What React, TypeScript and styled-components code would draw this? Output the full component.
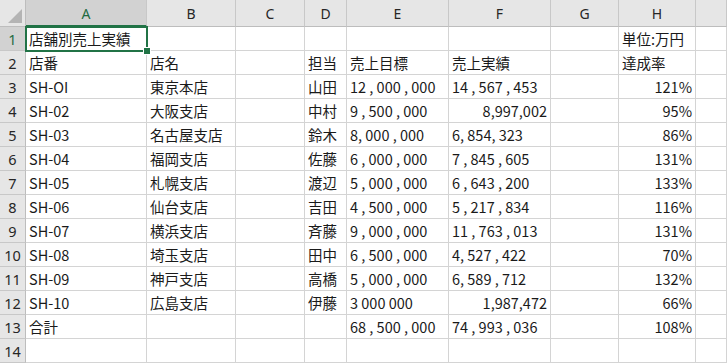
import React from "react";
import styled, { createGlobalStyle } from "styled-components";

const Global = createGlobalStyle`
  html, body { margin: 0; padding: 0; background: #fff; }
  body { font-family: "Noto Sans CJK JP", "Noto Sans", sans-serif; }
`;

const COLS = [26, 121, 89, 69, 42, 102, 102, 68, 77];
const LETTERS = ["A", "B", "C", "D", "E", "F", "G", "H", ""];

const Sheet = styled.div`
  position: relative;
  display: grid;
  grid-template-columns: ${COLS.map((c) => c + "px").join(" ")} 1fr;
  grid-template-rows: 27px repeat(14, 24px);
  width: 727px;
  height: 363px;
  overflow: hidden;
`;

const Corner = styled.div`
  background: #e6e6e6;
  border-right: 1px solid #bdbdbd;
  border-bottom: 1px solid #bdbdbd;
  box-sizing: border-box;
  display: flex;
  align-items: flex-end;
  justify-content: flex-end;
  padding: 0 3px 3px 0;
`;

const ColHead = styled.div<{ $sel?: boolean }>`
  box-sizing: border-box;
  background: ${(p) => (p.$sel ? "#d2d2d2" : "#e6e6e6")};
  color: ${(p) => (p.$sel ? "#1e6b41" : "#262626")};
  border-right: 1px solid #c8c8c8;
  border-bottom: ${(p) => (p.$sel ? "2px solid #217346" : "1px solid #bdbdbd")};
  font-family: "Noto Sans", "Liberation Sans", sans-serif;
  font-size: 14px;
  display: flex;
  align-items: center;
  justify-content: center;
  padding-top: 1px;
`;

const RowHead = styled.div<{ $sel?: boolean }>`
  box-sizing: border-box;
  background: ${(p) => (p.$sel ? "#d2d2d2" : "#e6e6e6")};
  color: ${(p) => (p.$sel ? "#1e6b41" : "#262626")};
  border-right: 1px solid #bdbdbd;
  border-bottom: 1px solid #c8c8c8;
  font-family: "Noto Sans", "Liberation Sans", sans-serif;
  font-size: 14.5px;
  display: flex;
  align-items: center;
  justify-content: center;
`;

const Cell = styled.div<{ $right?: boolean }>`
  box-sizing: border-box;
  border-right: 1px solid #d4d4d4;
  border-bottom: 1px solid #d4d4d4;
  color: #1a1a1a;
  font-size: 14.5px;
  line-height: 23px;
  padding: 0 ${(p) => (p.$right ? "3px" : "2px")} 0 3px;
  text-align: ${(p) => (p.$right ? "right" : "left")};
  white-space: nowrap;
  overflow: visible;
`;

const Selection = styled.div`
  position: absolute;
  left: 25px;
  top: 26px;
  width: 123px;
  height: 26px;
  box-sizing: border-box;
  border: 2px solid #217346;
  pointer-events: none;
`;

const Handle = styled.div`
  position: absolute;
  right: -5px;
  bottom: -5px;
  width: 6px;
  height: 6px;
  background: #217346;
  border: 1px solid #fff;
`;

type Row = (string | { t: string; r: true })[];

const R = (t: string) => ({ t, r: true as const });

const rows: Row[] = [
  ["店舗別売上実績", "", "", "", "", "", "", "単位:万円", ""],
  ["店番", "店名", "", "担当", "売上目標", "売上実績", "", "達成率", ""],
  ["SH-OI", "東京本店", "", "山田", "12 , 000 , 000", "14 , 567 , 453", "", R("121%"), ""],
  ["SH-02", "大阪支店", "", "中村", "9 , 500 , 000", R("8,997,002"), "", R("95%"), ""],
  ["SH-03", "名古屋支店", "", "鈴木", "8, 000 , 000", "6, 854, 323", "", R("86%"), ""],
  ["SH-04", "福岡支店", "", "佐藤", "6 , 000 , 000", "7 , 845 , 605", "", R("131%"), ""],
  ["SH-05", "札幌支店", "", "渡辺", "5 , 000 , 000", "6 , 643 , 200", "", R("133%"), ""],
  ["SH-06", "仙台支店", "", "吉田", "4 , 500 , 000", "5 , 217 , 834", "", R("116%"), ""],
  ["SH-07", "横浜支店", "", "斉藤", "9 , 000 , 000", "11 , 763 , 013", "", R("131%"), ""],
  ["SH-08", "埼玉支店", "", "田中", "6 , 500 , 000", "4, 527 , 422", "", R("70%"), ""],
  ["SH-09", "神戸支店", "", "高橋", "5 , 000 , 000", "6, 589 , 712", "", R("132%"), ""],
  ["SH-10", "広島支店", "", "伊藤", "3 000 000", R("1,987,472"), "", R("66%"), ""],
  ["合計", "", "", "", "68 , 500 , 000", "74 , 993 , 036", "", R("108%"), ""],
  ["", "", "", "", "", "", "", "", ""],
];

export default function App() {
  return (
    <>
      <Global />
      <Sheet>
        <Corner>
          <svg width="14" height="14" viewBox="0 0 14 14">
            <polygon points="14,0 14,14 0,14" fill="#b4b4b4" />
          </svg>
        </Corner>
        {LETTERS.map((l, i) => (
          <ColHead key={"h" + i} $sel={i === 0}>
            {l}
          </ColHead>
        ))}
        {rows.map((row, ri) => (
          <React.Fragment key={"r" + ri}>
            <RowHead $sel={ri === 0}>{ri + 1}</RowHead>
            {row.map((c, ci) =>
              typeof c === "string" ? (
                <Cell key={ci}>{c}</Cell>
              ) : (
                <Cell key={ci} $right>
                  {c.t}
                </Cell>
              )
            )}
          </React.Fragment>
        ))}
        <Selection>
          <Handle />
        </Selection>
      </Sheet>
    </>
  );
}
